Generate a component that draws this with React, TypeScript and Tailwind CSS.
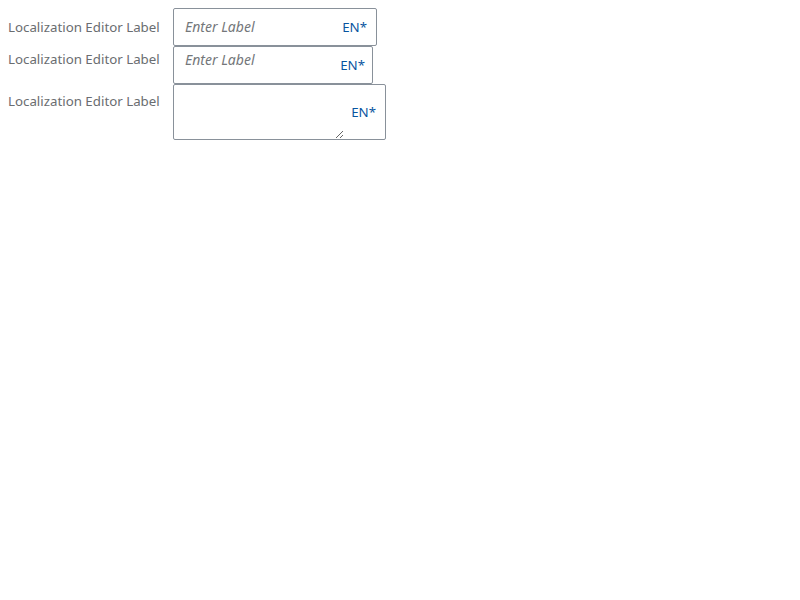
import React from 'react';

const labelCls = 'w-[165px] shrink-0 text-[13.3px] leading-[19px] text-[#6a6d70]';
const tagCls = 'text-[13.3px] leading-[19px] text-[#0854a0]';

export default function App() {
  return (
    <div className="min-h-screen bg-white p-2 font-['Noto_Sans',sans-serif]">
      {/* single line input */}
      <div className="flex">
        <div className={`${labelCls} pt-[10px]`}>Localization Editor Label</div>
        <div className="flex h-[38px] w-[204px] items-center rounded-[2px] border border-[#89919a] bg-white">
          <input
            className="h-full min-w-0 flex-1 bg-transparent pb-[2px] pl-[11px] text-[14px] italic text-[#32363a] outline-none placeholder:text-[#74777a]"
            placeholder="Enter Label"
          />
          <span className={`${tagCls} ml-2 mr-[9px]`}>EN*</span>
        </div>
      </div>

      {/* textarea, fixed height */}
      <div className="flex">
        <div className={`${labelCls} pt-[4px]`}>Localization Editor Label</div>
        <div className="flex h-[38px] w-[200px] items-center rounded-[2px] border border-[#89919a] bg-white">
          <textarea
            className="h-full min-w-0 flex-1 resize-none bg-transparent pl-[11px] pt-[3px] text-[14px] leading-[19px] italic text-[#32363a] outline-none placeholder:text-[#74777a]"
            placeholder="Enter Label"
          />
          <span className={`${tagCls} ml-2 mr-[7px]`}>EN*</span>
        </div>
      </div>

      {/* resizable textarea */}
      <div className="flex">
        <div className={`${labelCls} pt-[8px]`}>Localization Editor Label</div>
        <div className="flex h-[56px] w-[213px] items-center rounded-[2px] border border-[#89919a] bg-white">
          <textarea className="h-full w-[170px] shrink-0 bg-transparent pl-[11px] pt-[4px] text-[14px] leading-[19px] text-[#32363a] outline-none" />
          <span className={`${tagCls} ml-auto mr-[9px]`}>EN*</span>
        </div>
      </div>
    </div>
  );
}
